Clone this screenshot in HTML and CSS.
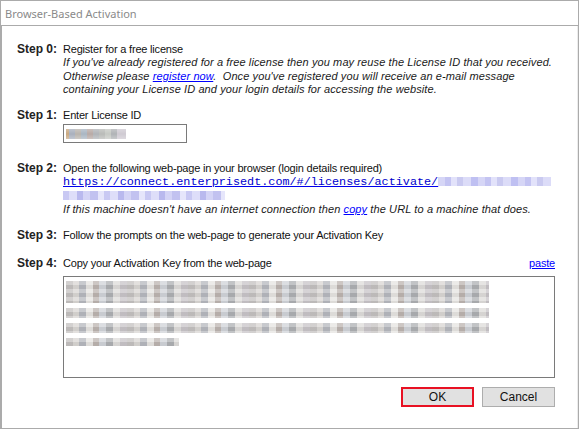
FILE: index.html
```html
<!DOCTYPE html>
<html>
<head>
<meta charset="utf-8">
<link rel="stylesheet" href="styles.css">
</head>
<body>
<div class="window">
  <div class="titlebar">Browser-Based Activation</div>
  <div class="content">
    <div class="step s0">
      <div class="label">Step 0:</div>
      <div class="body">
        <div class="line">Register for a free license</div>
        <div class="note">If you've already registered for a free license then you may reuse the License ID that you received.<br>Otherwise please <a class="link">register now</a>.&nbsp; Once you've registered you will receive an e-mail message<br>containing your License ID and your login details for accessing the website.</div>
      </div>
    </div>
    <div class="step s1">
      <div class="label">Step 1:</div>
      <div class="body">
        <div class="line">Enter License ID</div>
        <div class="input"><span class="blur blur-id"></span></div>
      </div>
    </div>
    <div class="step s2">
      <div class="label">Step 2:</div>
      <div class="body">
        <div class="line">Open the following web-page in your browser (login details required)</div>
        <div class="url"><a class="urllink">https://connect.enterprisedt.com/#/licenses/activate/<span class="blur blur-url1"></span></a></div>
        <div class="url"><a class="urllink"><span class="blur blur-url2"></span></a></div>
        <div class="note">If this machine doesn't have an internet connection then <a class="link">copy</a> the URL to a machine that does.</div>
      </div>
    </div>
    <div class="step s3">
      <div class="label">Step 3:</div>
      <div class="body">
        <div class="line">Follow the prompts on the web-page to generate your Activation Key</div>
      </div>
    </div>
    <div class="step s4">
      <div class="label">Step 4:</div>
      <div class="body">
        <div class="line split"><span>Copy your Activation Key from the web-page</span><a class="link">paste</a></div>
        <div class="keybox">
          <div class="blur krow ka"></div>
          <div class="blur krow kb"></div>
          <div class="blur krow kc"></div>
          <div class="blur krow kd"></div>
        </div>
      </div>
    </div>
    <div class="buttons">
      <div class="btn ok">OK</div>
      <div class="btn">Cancel</div>
    </div>
  </div>
</div>
</body>
</html>
```
FILE: styles.css
```css
html, body { margin: 0; padding: 0; background: #fff; }
.window {
  width: 579px; height: 429px; box-sizing: border-box;
  border: 1px solid #ababab;
  display: flex; flex-direction: column;
  font-family: "Liberation Sans", Arial, sans-serif;
  font-size: 11px; color: #111;
}
.titlebar {
  height: 25px; border-bottom: 1px solid #ababab;
  padding-left: 4px; box-sizing: border-box;
  font-family: "Noto Sans", "Open Sans", sans-serif; font-size: 11px;
  color: #8a8a8a; line-height: 25px;
}
.content {
  flex: 1; border-left: 1px solid #ababab; border-right: 1px solid #ececec;
  padding: 16px 22px 0 15px;
  display: flex; flex-direction: column;
}
.step { display: grid; grid-template-columns: 46px 1fr; line-height: 14px; }
.s1 { margin-top: 11px; }
.s2 { margin-top: 18px; }
.s3 { margin-top: 11px; }
.s4 { margin-top: 14px; }
.label { font-weight: bold; font-size: 12px; color: #222; }
.line { white-space: nowrap; letter-spacing: -0.2px; }
.note { font-style: italic; white-space: nowrap; line-height: 13.7px; color: #1a1a1a; letter-spacing: 0.1px; }
.link { color: #0000ff; text-decoration: underline; }
.input {
  margin-top: 2px; width: 124px; height: 19px; box-sizing: border-box;
  border: 1px solid #7a7a7a; padding: 4px 2px; display: flex;
}
.blur { display: inline-block; }
.blur-id {
  width: 60px; height: 10px;
  background:
    linear-gradient(rgba(255,255,255,0.25), rgba(255,255,255,0) 50%, rgba(255,255,255,0.3)),
    linear-gradient(90deg, #c9a982 0 3px, #a9b0bd 3px 9px, #b9b4ae 9px 15px, #aab6c2 15px 21px, #b8aaa6 21px 27px, #b1b4b8 27px 33px, #b9bbb8 33px 39px, #c6c9c4 39px 45px, #b0b3b6 45px 51px, #cfcad2 51px 60px);
}
.url {
  font-family: "Liberation Mono", "Courier New", monospace; font-size: 11.8px;
  line-height: 14px; white-space: nowrap;
}
.urllink { color: #0000cc; text-decoration: underline; text-decoration-color: #0000ee; }
.blur-url1 {
  width: 113px; height: 9px; vertical-align: -1px;
  background: repeating-linear-gradient(90deg, #d6d6f6 0 7px, #c4c4f2 7px 13px, #e2e2fa 13px 19px, #cacaf0 19px 25px, #dcdcf8 25px 33px, #bfc0f2 33px 40px);
}
.blur-url2 {
  width: 162px; height: 9px; vertical-align: -1px;
  background: repeating-linear-gradient(90deg, #c9c9f3 0 6px, #dedef9 6px 14px, #b9b9ee 14px 20px, #d4d4f6 20px 27px, #c2c2f0 27px 35px, #e6e6fb 35px 41px);
}
.split { display: flex; justify-content: space-between; }
.keybox {
  margin-top: 6px; height: 102px; box-sizing: border-box;
  border: 1px solid #7a7a7a; padding: 4px 2px;
  display: flex; flex-direction: column; gap: 5px;
}
.krow {
  display: block;
  background:
    repeating-linear-gradient(180deg, rgba(255,255,255,0.25) 0 4px, rgba(0,0,0,0.04) 4px 8px),
    repeating-linear-gradient(90deg, #c4c1c0 0 7px, #d9d6d3 7px 13px, #b6b8be 13px 20px, #e6e4e1 20px 27px, #bcb4b0 27px 33px, #d0d3d8 33px 40px, #aeb0b3 40px 47px, #dedcda 47px 54px, #c8c4c8 54px 61px);
}
.ka { width: 423px; height: 22px; }
.kb { width: 423px; height: 10px; }
.kc { width: 423px; height: 10px; }
.kd { width: 113px; height: 8px; }
.buttons {
  display: flex; justify-content: flex-end; gap: 8px; margin-top: 9px;
}
.btn {
  width: 73px; height: 20px; box-sizing: border-box;
  background: #e1e1e1; border: 1px solid #adadad;
  display: flex; align-items: center; justify-content: center;
  font-family: "Liberation Sans", Arial, sans-serif; font-size: 12px; color: #111;
}
.btn.ok { border: 2px solid #e81123; }
```
